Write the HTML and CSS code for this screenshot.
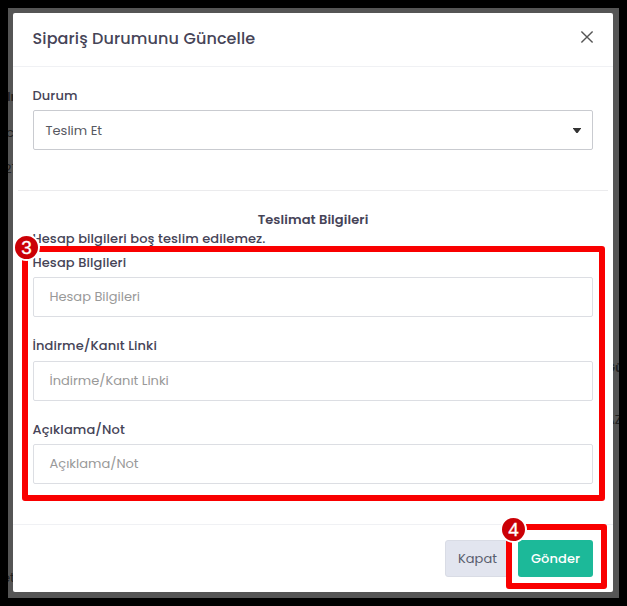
FILE: index.html
```html
<!DOCTYPE html>
<html lang="tr">
<head>
<meta charset="utf-8">
<title>Sipariş Durumunu Güncelle</title>
<link rel="stylesheet" href="styles.css">
</head>
<body>
<div class="backdrop">
  <span class="behind behind-a">lr</span>
  <span class="behind behind-b">c</span>
  <span class="behind behind-c">21</span>
  <span class="behind behind-d">et</span>
  <span class="behind behind-e">Gü</span>
  <span class="behind behind-f">AZ</span>
  <section class="modal">
    <header class="modal-header">
      <h1 class="title">Sipariş Durumunu Güncelle</h1>
      <svg class="close" viewBox="0 0 14 14"><path d="M1.4 1.4 12.6 12.6M12.6 1.4 1.4 12.6"/></svg>
    </header>
    <div class="modal-body">
      <label class="label">Durum</label>
      <div class="control select"><span class="select-text">Teslim Et</span>
        <svg class="caret" viewBox="0 0 8 5"><path d="M0 0H8V.6L4.6 5H3.4L0 .6Z"/></svg>
      </div>
      <hr class="divider">
      <p class="section-title"><span>Teslimat Bilgileri</span></p>
      <p class="notice">Hesap bilgileri boş teslim edilemez.</p>
      <div class="field">
        <label class="label">Hesap Bilgileri</label>
        <div class="control">Hesap Bilgileri</div>
      </div>
      <div class="field">
        <label class="label">İndirme/Kanıt Linki</label>
        <div class="control">İndirme/Kanıt Linki</div>
      </div>
      <div class="field">
        <label class="label">Açıklama/Not</label>
        <div class="control">Açıklama/Not</div>
      </div>
    </div>
    <footer class="modal-footer">
      <button class="btn btn-close">Kapat</button>
      <button class="btn btn-send">Gönder</button>
    </footer>
  </section>
</div>
<div class="mark mark-fields"></div>
<div class="mark mark-send"></div>
<div class="badge badge-three">3</div>
<div class="badge badge-four">4</div>
</body>
</html>
```
FILE: styles.css
```css
* { box-sizing: border-box; }
body {
  margin: 0;
  width: 627px;
  height: 606px;
  padding: 8px;
  background: #000;
  overflow: hidden;
  font-family: Poppins, Inter, sans-serif;
  font-size: 13px;
  color: #464457;
}
.backdrop {
  position: relative;
  width: 611px;
  height: 590px;
  padding: 5px;
  background: #555;
  overflow: hidden;
}
.modal {
  position: relative;
  width: 600px;
  height: 579px;
  background: #fff;
  border-radius: 2px;
}
.behind { position: absolute; color: #222; line-height: 16px; }
.behind-a { left: -1px; top: 81px; font-weight: 600; }
.behind-b { left: -2px; top: 117px; }
.behind-c { left: -4px; top: 153px; }
.behind-d { left: -6px; top: 562px; }
.behind-e { left: 597px; top: 352px; font-weight: 600; }
.behind-f { left: 598px; top: 404px; }
.modal-header {
  display: flex;
  justify-content: space-between;
  height: 54px;
  padding: 0 19px;
  border-bottom: 1px solid #f0f1f4;
}
.title { margin: 0; padding-left: .5px; font-size: 16px; line-height: 51px; font-weight: 500; letter-spacing: .12px; white-space: nowrap; }
.close { width: 14px; height: 14px; margin-top: 17px; fill: none; stroke: #555; stroke-width: 1.4; }
.modal-body { padding: 18px 20px 0; height: 457px; }
.label, .notice { font-weight: 500; letter-spacing: .09px; white-space: nowrap; }
.label { display: block; height: 25px; line-height: 21px; margin-left: -.5px; }
.control {
  height: 40px;
  padding: 0 15.5px;
  border: 1px solid #dcdee3;
  border-radius: 2px;
  line-height: 37px;
  color: #999;
  white-space: nowrap;
}
.select {
  display: flex;
  align-items: center;
  justify-content: space-between;
  padding: 0 11px 0 11.5px;
  border-color: #c9cbd0;
  color: #575962;
}
.select .caret { width: 8px; height: 5px; fill: #333; }
.divider { height: 1px; margin: 40px -15px 19px; border: 0; background: #ebebed; }
.section-title { margin: 0; height: 19px; line-height: 19px; text-align: center; font-weight: 600; letter-spacing: .1px; }
.notice { margin: 0 0 0 -.5px; height: 22px; line-height: 19px; }
.field { height: 84px; padding-top: 1px; }
.field + .field { padding-top: 0; height: 83px; }
.field + .field .label { height: 26px; }
.field:last-child .label { line-height: 23px; }
.modal-footer {
  display: flex;
  justify-content: flex-end;
  height: 68px;
  padding: 15px 20px;
  border-top: 1px solid #f0f1f4;
  gap: 8px;
}
.btn { height: 37px; padding: 0; border: 0; border-radius: 3px; font: inherit; line-height: 34px; }
.btn-close { width: 65px; background: #e2e5ef; border: 1px solid #d9dce5; color: #595d6e; line-height: 32px; }
.btn-send { width: 75px; background: #1cb999; color: #fff; font-weight: 500; letter-spacing: .1px; }
.mark { position: absolute; border: 6px solid #f90000; border-radius: 3px; }
.mark-fields { left: 22px; top: 246px; width: 583px; height: 255px; }
.mark-send { left: 506px; top: 524px; width: 101px; height: 65px; }
.badge {
  position: absolute;
  width: 27px;
  height: 27px;
  border: 2px solid #fff;
  border-radius: 50%;
  background: #cb0006;
  color: #fff;
  font: 400 19px/24px "Liberation Sans", sans-serif;
  text-align: center;
  -webkit-text-stroke: .3px #fff;
}
.badge-three { left: 13px; top: 234px; }
.badge-four { left: 500px; top: 516px; }
.field:last-child .label { height: 26px; }
```
